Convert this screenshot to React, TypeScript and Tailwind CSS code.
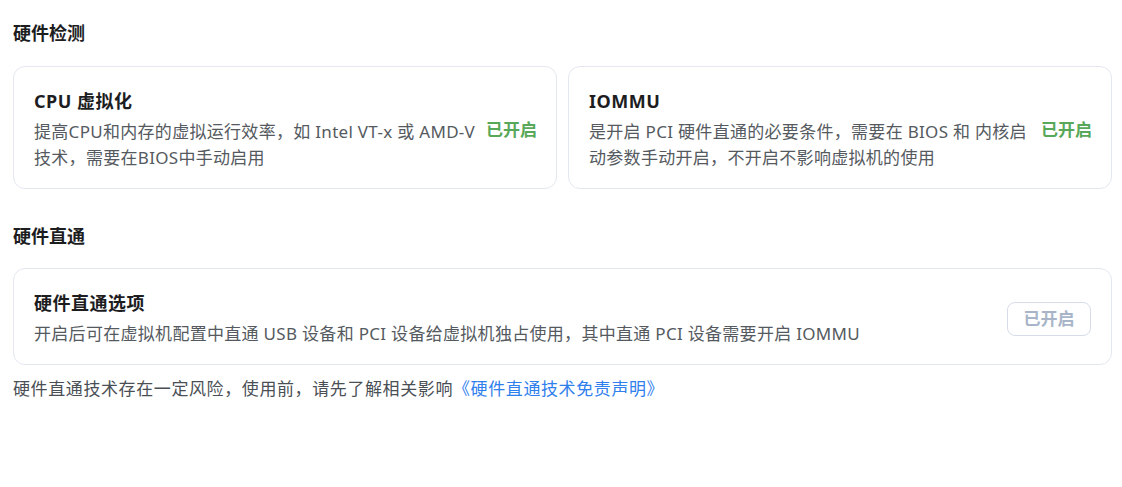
import React from "react";

const font = { fontFamily: '"Noto Sans", "Noto Sans CJK SC", sans-serif' };

function Card({ title, lines, right }: { title: string; lines: string[]; right: React.ReactNode }) {
  return (
    <div className="flex items-center justify-between gap-[8px] rounded-[12px] border border-[#e3e8f0] bg-white pl-[20px] pr-[19px] pt-[21px] pb-[17px]">
      <div className="flex min-w-0 flex-col gap-[5px]">
        <div className="text-[18px] font-bold leading-[26px] tracking-[0.5px] text-[#1d1d1f]">{title}</div>
        <div className="text-[17px] leading-[26px] tracking-[0.3px] text-[#555a60]">
          {lines.map((l, i) => (
            <div key={i} className="whitespace-nowrap">{l}</div>
          ))}
        </div>
      </div>
      {right}
    </div>
  );
}

const Green = () => (
  <span className="shrink-0 text-[17px] font-bold leading-[24px] text-[#58a85a]">已开启</span>
);

export default function App() {
  return (
    <div className="min-h-[487px] bg-white pl-[13px] pr-[10px] pt-[21px]" style={font}>
      <h2 className="text-[18px] font-bold leading-[24px] text-[#1d1d1f]">硬件检测</h2>
      <div className="mt-[21px] grid grid-cols-2 gap-[11px]">
        <Card
          title="CPU 虚拟化"
          lines={["提高CPU和内存的虚拟运行效率，如 Intel VT-x 或 AMD-V", "技术，需要在BIOS中手动启用"]}
          right={<Green />}
        />
        <Card
          title="IOMMU"
          lines={["是开启 PCI 硬件直通的必要条件，需要在 BIOS 和 内核启", "动参数手动开启，不开启不影响虚拟机的使用"]}
          right={<Green />}
        />
      </div>
      <h2 className="mt-[35px] text-[18px] font-bold leading-[24px] text-[#1d1d1f]">硬件直通</h2>
      <div className="mt-[20px]">
        <div className="flex items-center justify-between rounded-[12px] border border-[#e3e8f0] bg-white pt-[21px] pb-[17px] pl-[20px] pr-[20px]">
          <div className="flex flex-col gap-[5px]">
            <div className="text-[18px] font-bold leading-[26px] tracking-[0.5px] text-[#1d1d1f]">硬件直通选项</div>
            <div className="text-[17px] leading-[26px] tracking-[0.3px] text-[#555a60]">
              开启后可在虚拟机配置中直通 USB 设备和 PCI 设备给虚拟机独占使用，其中直通 PCI 设备需要开启 IOMMU
            </div>
          </div>
          <button className="h-[34px] w-[84px] rounded-[8px] border border-[#d6dde8] bg-white text-[17px] font-bold text-[#a8b5c8]">
            已开启
          </button>
        </div>
      </div>
      <p className="mt-[12px] text-[17px] leading-[24px] tracking-[0.6px] text-[#4a4f55]">
        硬件直通技术存在一定风险，使用前，请先了解相关影响
        <span className="text-[#2f80ed]">《硬件直通技术免责声明》</span>
      </p>
    </div>
  );
}
